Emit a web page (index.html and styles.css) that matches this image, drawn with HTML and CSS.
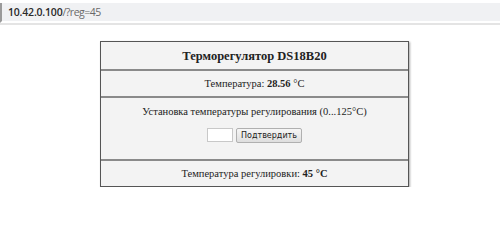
FILE: index.html
```html
<!DOCTYPE html>
<html lang="ru">
<head>
  <meta charset="UTF-8">
  <title>Терморегулятор DS18B20</title>
  <link rel="stylesheet" href="styles.css">
</head>
<body>
  <div class="urlbar">
    <span class="url-host">10.42.0.100</span><span class="url-path">/?reg=45</span>
  </div>
  <div class="page">
    <div class="panel">
      <div class="row title">Терморегулятор DS18B20</div>
      <div class="row">Температура: <b>28.56</b> °C</div>
      <div class="row setup">
        <div>Установка температуры регулирования (0...125°C)</div>
        <form class="set-form">
          <input type="text" class="set-input">
          <button type="submit" class="set-btn">Подтвердить</button>
        </form>
      </div>
      <div class="row">Температура регулировки: <b>45 °C</b></div>
    </div>
  </div>
</body>
</html>
```

FILE: styles.css
```css
body {
  margin: 0;
  background: #ffffff;
  font-family: 'Liberation Serif', serif;
  color: #222;
}
.urlbar {
  height: 18px;
  margin-top: 3px;
  background: #f0f1f3;
  border-left: 2px solid #9a9a9a;
  padding-left: 6px;
  font-family: 'Open Sans', 'DejaVu Sans', sans-serif;
  font-size: 10.5px;
  line-height: 18px;
  letter-spacing: -0.2px;
  border-bottom: 2px solid #ffffff;
  box-shadow: 0 2px 0 #e4e4e4;
}
.url-host {
  color: #2a2a2a;
  font-weight: 600;
}
.url-path {
  color: #6a6a6a;
  letter-spacing: -0.5px;
}
.page {
  padding-top: 18px;
  display: flex;
  justify-content: center;
}
.panel {
  width: 307px;
  margin-left: 9px;
  background: #f3f3f3;
  border: 1px solid #555;
  box-shadow: 1px 1px 2px rgba(0, 0, 0, 0.35);
}
.row {
  text-align: center;
  font-size: 10.5px;
  height: 25px;
  line-height: 25px;
  border-top: 2px solid #8a8a8a;
}
.row:first-child {
  border-top: none;
  height: 27px;
  line-height: 28px;
}
.title {
  font-size: 12.5px;
  font-weight: bold;
}
.setup {
  line-height: normal;
  padding-top: 8px;
  box-sizing: border-box;
  height: 63px;
}
.set-form {
  margin-top: 11px;
  display: flex;
  justify-content: center;
  gap: 3px;
}
.set-input {
  width: 24px;
  height: 12px;
  padding: 0;
  border: 1px solid #c8c8c8;
  background: #fff;
}
.set-btn {
  font-family: 'DejaVu Sans', sans-serif;
  font-size: 8px;
  height: 15px;
  padding: 0 4px;
  border: 1px solid #b0b0b0;
  border-radius: 2px;
  background: linear-gradient(#f6f6f6, #dedede);
  color: #222;
}
```
